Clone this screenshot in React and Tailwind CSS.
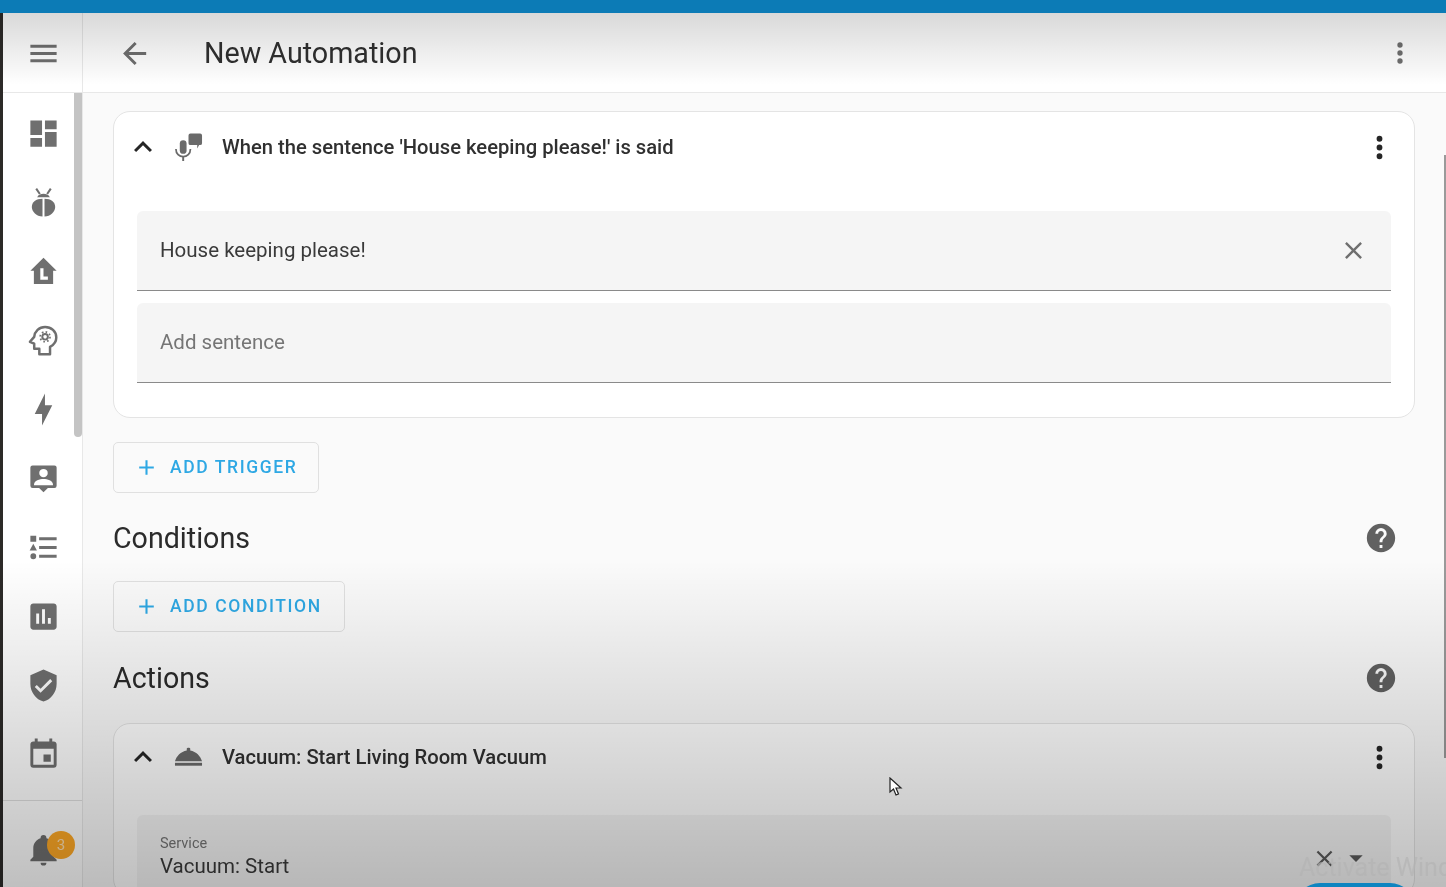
const MENU = 'M3,6H21V8H3V6M3,11H21V13H3V11M3,16H21V18H3V16Z';
const BACK = 'M20,11V13H8L13.5,18.5L12.08,19.92L4.16,12L12.08,4.08L13.5,5.5L8,11H20Z';
const DOTS = 'M12,16A2,2 0 0,1 14,18A2,2 0 0,1 12,20A2,2 0 0,1 10,18A2,2 0 0,1 12,16M12,10A2,2 0 0,1 14,12A2,2 0 0,1 12,14A2,2 0 0,1 10,12A2,2 0 0,1 12,10M12,4A2,2 0 0,1 14,6A2,2 0 0,1 12,8A2,2 0 0,1 10,6A2,2 0 0,1 12,4Z';
const CLOSE = 'M19,6.41L17.59,5L12,10.59L6.41,5L5,6.41L10.59,12L5,17.59L6.41,19L12,13.41L17.59,19L19,17.59L13.41,12L19,6.41Z';
const CHEVRON = 'M7.41,15.41L12,10.83L16.59,15.41L18,14L12,8L6,14L7.41,15.41Z';
const PLUS = 'M19,13H13V19H11V13H5V11H11V5H13V11H19V13Z';
const HELP = 'M15.07,11.25L14.17,12.17C13.45,12.89 13,13.5 13,15H11V14.5C11,13.39 11.45,12.39 12.17,11.67L13.41,10.41C13.78,10.05 14,9.55 14,9C14,7.89 13.1,7 12,7A2,2 0 0,0 10,9H8A4,4 0 0,1 12,5A4,4 0 0,1 16,9C16,9.88 15.64,10.67 15.07,11.25M13,19H11V17H13M12,2A10,10 0 0,0 2,12A10,10 0 0,0 12,22A10,10 0 0,0 22,12C22,6.47 17.5,2 12,2Z';
const CARET = 'M7,10L12,15L17,10H7Z';
const BELL = 'M21,19V20H3V19L5,17V11C5,7.9 7.03,5.17 10,4.29C10,4.19 10,4.1 10,4A2,2 0 0,1 12,2A2,2 0 0,1 14,4C14,4.1 14,4.19 14,4.29C16.97,5.17 19,7.9 19,11V17L21,19M14,21A2,2 0 0,1 12,23A2,2 0 0,1 10,21';

function Icon({ d, className }) {
  return (
    <svg viewBox="0 0 24 24" className={className} fill="currentColor">
      <path d={d} fillRule="evenodd" />
    </svg>
  );
}

const navIcons = [
  // dashboard
  <path key="a" d="M13,3V9H21V3M13,21H21V11H13M3,21H11V15H3M3,13H11V3H3V13Z" />,
  // beetle
  <g key="b">
    <path d="M7 2.5L9.5 6.2M17 2.5L14.5 6.2" stroke="currentColor" strokeWidth="1.4" fill="none" />
    <path d="M8 7.8C9 5.4 15 5.4 16 7.8L16.4 8.4H7.6Z" />
    <path d="M11.3 9.4V21.6C7.2 21.3 4 18.4 4 15C4 11.6 6.8 9.4 11.3 9.4Z" />
    <path d="M12.7 9.4V21.6C16.8 21.3 20 18.4 20 15C20 11.6 17.2 9.4 12.7 9.4Z" />
  </g>,
  // home with L
  <path key="c" fillRule="evenodd" d="M12 2.5L3 11.5H5.4V20.5H18.6V11.5H21ZM9.8 9.8H12V15.5H15V17.6H9.8Z" />,
  // head cog
  <g key="d" transform="translate(-1.6 -1.6) scale(1.13)">
    <path d="M13 3.8C9.3 3.8 6.7 6.5 6.4 9.8L3.8 12.8L6.4 14V17H9.5V20.4H16V15.9C18.4 14.6 19.8 12.5 19.8 10.2C19.8 6.5 16.7 3.8 13 3.8Z" fill="none" stroke="currentColor" strokeWidth="1.5" strokeLinejoin="round" />
    <circle cx="13" cy="9.8" r="1.7" fill="none" stroke="currentColor" strokeWidth="1.2" />
    <circle cx="13" cy="9.8" r="3" fill="none" stroke="currentColor" strokeWidth="1" strokeDasharray="1 1.35" />
  </g>,
  // lightning
  <path key="e" d="M11 15H6L13 1V9H18L11 23V15Z" />,
  // contact bubble
  <g key="f">
    <path d="M4.5 3H19.5A1.5 1.5 0 0 1 21 4.5V17A1.5 1.5 0 0 1 19.5 18.5H15L12 21.5L9 18.5H4.5A1.5 1.5 0 0 1 3 17V4.5A1.5 1.5 0 0 1 4.5 3Z" />
    <circle cx="12" cy="8.3" r="2.9" fill="#fff" />
    <path d="M5.5 16.2C5.5 13.4 9.4 12.4 12 12.4C14.6 12.4 18.5 13.4 18.5 16.2V16.6H5.5Z" fill="#fff" />
  </g>,
  // list
  <path key="g" d="M5,9.5L7.5,14H2.5L5,9.5M3,4H7V8H3V4M5,20A2,2 0 0,0 7,18A2,2 0 0,0 5,16A2,2 0 0,0 3,18A2,2 0 0,0 5,20M9,5V7H21V5H9M9,19H21V17H9V19M9,13H21V11H9V13Z" />,
  // chart box
  <path key="h" fillRule="evenodd" d="M9 17H7V10H9V17M13 17H11V7H13V17M17 17H15V13H17V17M19 3H5C3.9 3 3 3.9 3 5V19C3 20.1 3.9 21 5 21H19C20.1 21 21 20.1 21 19V5C21 3.9 20.1 3 19 3Z" />,
  // shield check
  <path key="i" fillRule="evenodd" d="M10,17L6,13L7.41,11.59L10,14.17L16.59,7.58L18,9M12,1L3,5V11C3,16.55 6.84,21.74 12,23C17.16,21.74 21,16.55 21,11V5L12,1Z" />,
  // calendar
  <path key="j" fillRule="evenodd" d="M19,19H5V8H19M16,1V3H8V1H6V3H5C3.89,3 3,3.89 3,5V19A2,2 0 0,0 5,21H19A2,2 0 0,0 21,19V5C21,3.89 20.1,3 19,3H18V1M17,12H12V17H17V12Z" />,
];

function Sidebar() {
  return (
    <aside className="flex w-20 shrink-0 flex-col border-r border-[#e8e8e8] bg-white text-[#6f6f6f]">
      <div className="flex h-[80px] items-center justify-center border-b border-[#e8e8e8] pl-[2px] pt-px">
        <Icon d={MENU} className="size-[35px]" />
      </div>
      <div className="relative flex-1">
        <div className="flex flex-col items-center pl-[2px] pt-[6px]">
          {navIcons.map((icon, i) => (
            <div key={i} className="flex h-[69px] w-full items-center justify-center">
              <svg viewBox="0 0 24 24" fill="currentColor" className="size-[35px]">{icon}</svg>
            </div>
          ))}
        </div>
        {/* scrollbar */}
        <div className="absolute right-0 top-0 h-[344px] w-2 rounded-b-sm bg-[#c4c4c4]" />
      </div>
      <div className="relative flex h-[87px] items-start justify-center border-t border-[#e0e0e0] pl-[2px] pt-[31px]">
        <Icon d={BELL} className="size-[35px]" />
        <span className="absolute left-[44px] top-[30px] flex size-[28px] items-center justify-center rounded-full bg-[#ffa926] text-[15px] text-[#ffe0b0]">3</span>
      </div>
    </aside>
  );
}

function Field({ children, muted }) {
  return (
    <div className="flex h-[80px] items-center justify-between rounded-t-md border-b-[1.5px] border-[#8a8a8a] bg-[#f5f5f5] pl-[23px] pr-[23px]">
      <span className={`text-[20.5px] ${muted ? 'text-[#757575]' : 'text-[#3a3a3a]'}`}>{children}</span>
      {!muted && <Icon d={CLOSE} className="size-[29px] text-[#6f6f6f]" />}
    </div>
  );
}

function CardHeader({ icon, title, height }) {
  return (
    <div className={`flex items-center pl-[11px] pr-[17px] ${height}`}>
      <Icon d={CHEVRON} className="size-[36px] text-[#262626]" />
      <div className="ml-[13px] flex w-[29px] justify-center">{icon}</div>
      <h3 className="ml-[19px] flex-1 text-[20.2px] font-medium text-[#303030]">{title}</h3>
      <Icon d={DOTS} className="size-[35px] text-[#262626]" />
    </div>
  );
}

function AddButton({ label, width }) {
  return (
    <button className={`flex h-[51px] items-center rounded-[5px] border border-[#e0e0e0] pl-[20px] text-[#2ea8e4] ${width}`}>
      <Icon d={PLUS} className="size-[25px]" />
      <span className="ml-[11px] text-[17.5px] font-medium tracking-[1.6px]">{label}</span>
    </button>
  );
}

function SectionTitle({ children }) {
  return (
    <div className="flex items-center justify-between pr-[17px]">
      <h2 className="text-[28.6px] leading-[40px] text-[#2b2b2b]">{children}</h2>
      <Icon d={HELP} className="size-[34px] text-[#616161]" />
    </div>
  );
}

export default function App() {
  return (
    <div className="relative flex h-screen w-full flex-col overflow-hidden bg-[#fafafa] font-['Roboto',sans-serif] blur-[0.5px]">
      <div className="h-[13px] shrink-0 bg-[#0c7bb6]" />
      <div className="flex min-h-0 flex-1 border-l-[3px] border-[#2c2a28]">
        <Sidebar />
        <div className="flex min-w-0 flex-1 flex-col">
          <header className="flex h-[80px] shrink-0 items-center border-b border-[#e8e8e8] bg-white pl-[34px] pr-[30px] pt-px text-[#6f6f6f]">
            <Icon d={BACK} className="size-[35px]" />
            <h1 className="ml-[52px] flex-1 pt-[2px] text-[28.7px] text-[#303030]">New Automation</h1>
            <Icon d={DOTS} className="size-[32px]" />
          </header>

          <main className="min-h-0 flex-1 overflow-hidden pl-[30px] pr-[31px] pt-[18px]">
            <section className="rounded-[17px] border border-[#e4e4e4] bg-white">
              <CardHeader
                height="h-[70px]"
                title="When the sentence 'House keeping please!' is said"
                icon={
                  <svg viewBox="0 0 30 30" className="size-[30px] text-[#6a6a6a]" fill="currentColor">
                    <rect x="6" y="8" width="7" height="14" rx="3.5" />
                    <path d="M2 17C2 22 5.5 25 9.5 25C13.5 25 17 22 17 17" fill="none" stroke="currentColor" strokeWidth="1.8" />
                    <path d="M8.5 25H10.5V29.5H8.5Z" />
                    <path d="M17 1H27A2 2 0 0 1 29 3V11A2 2 0 0 1 27 13H26L24 16.5V13H17A2 2 0 0 1 15 11V3A2 2 0 0 1 17 1Z" />
                  </svg>
                }
              />
              <div className="flex flex-col gap-[12px] px-[23px] pb-[34px] pt-[29px]">
                <Field>House keeping please!</Field>
                <Field muted>Add sentence</Field>
              </div>
            </section>

            <div className="mt-[24px]">
              <AddButton label="ADD TRIGGER" width="w-[206px]" />
            </div>

            <div className="mt-[25px]">
              <SectionTitle>Conditions</SectionTitle>
            </div>
            <div className="mt-[23px]">
              <AddButton label="ADD CONDITION" width="w-[232px]" />
            </div>

            <div className="mt-[26px]">
              <SectionTitle>Actions</SectionTitle>
            </div>

            <section className="mt-[25px] rounded-[17px] border border-[#e4e4e4] bg-white">
              <CardHeader
                height="h-[66px]"
                title="Vacuum: Start Living Room Vacuum"
                icon={
                  <svg viewBox="0 0 30 24" className="h-[24px] w-[30px] text-[#6a6a6a]" fill="currentColor">
                    <path d="M13.2 3.5C13.2 2 16.8 2 16.8 3.5V5.2C23 6.3 27.5 11 29 16.5H1C2.5 11 7 6.3 13.2 5.2Z" />
                    <path d="M1 18H29V21H1Z" />
                  </svg>
                }
              />
              <div className="px-[23px] pt-[25px]">
                <div className="flex h-[80px] items-start justify-between rounded-t-md bg-[#f5f5f5] pl-[23px] pr-[19px] pt-[20px]">
                  <div>
                    <div className="text-[14.5px] leading-[17px] text-[#757575]">Service</div>
                    <div className="mt-px text-[20.5px] leading-[26px] text-[#3a3a3a]">Vacuum: Start</div>
                  </div>
                  <div className="mt-[7px] flex items-center gap-[2px] text-[#5c5c5c]">
                    <Icon d={CLOSE} className="size-[27px]" />
                    <Icon d={CARET} className="size-[32px]" />
                  </div>
                </div>
              </div>
            </section>
          </main>
        </div>
      </div>

      {/* save button peeking in at the bottom edge */}
      <div className="absolute left-[1295px] top-[883px] h-[50px] w-[120px] rounded-full bg-[#12b0ff]" />

      {/* main scrollbar */}
      <div className="absolute right-0 top-[155px] h-[603px] w-[2px] bg-[#9a9a9a]" />

      {/* video vignette over the whole page */}
      <div className="pointer-events-none absolute inset-x-0 top-[13px] h-[72px] bg-gradient-to-b from-black/15 to-transparent" />
      <div className="pointer-events-none absolute inset-x-0 bottom-0 h-[327px] bg-gradient-to-b from-transparent to-black/25" />

      <div className="pointer-events-none absolute left-[1299px] top-[849px] whitespace-nowrap text-[25px] text-[#b4b4b4]/70">Activate Windows</div>

      {/* cursor */}
      <svg viewBox="0 0 14 20" className="absolute left-[889px] top-[777px] h-[20px] w-[14px]">
        <path d="M1 1V15L4.5 12L7 18L9.5 17L7 11H12Z" fill="#fff" stroke="#222" strokeWidth="1.2" />
      </svg>
    </div>
  );
}
